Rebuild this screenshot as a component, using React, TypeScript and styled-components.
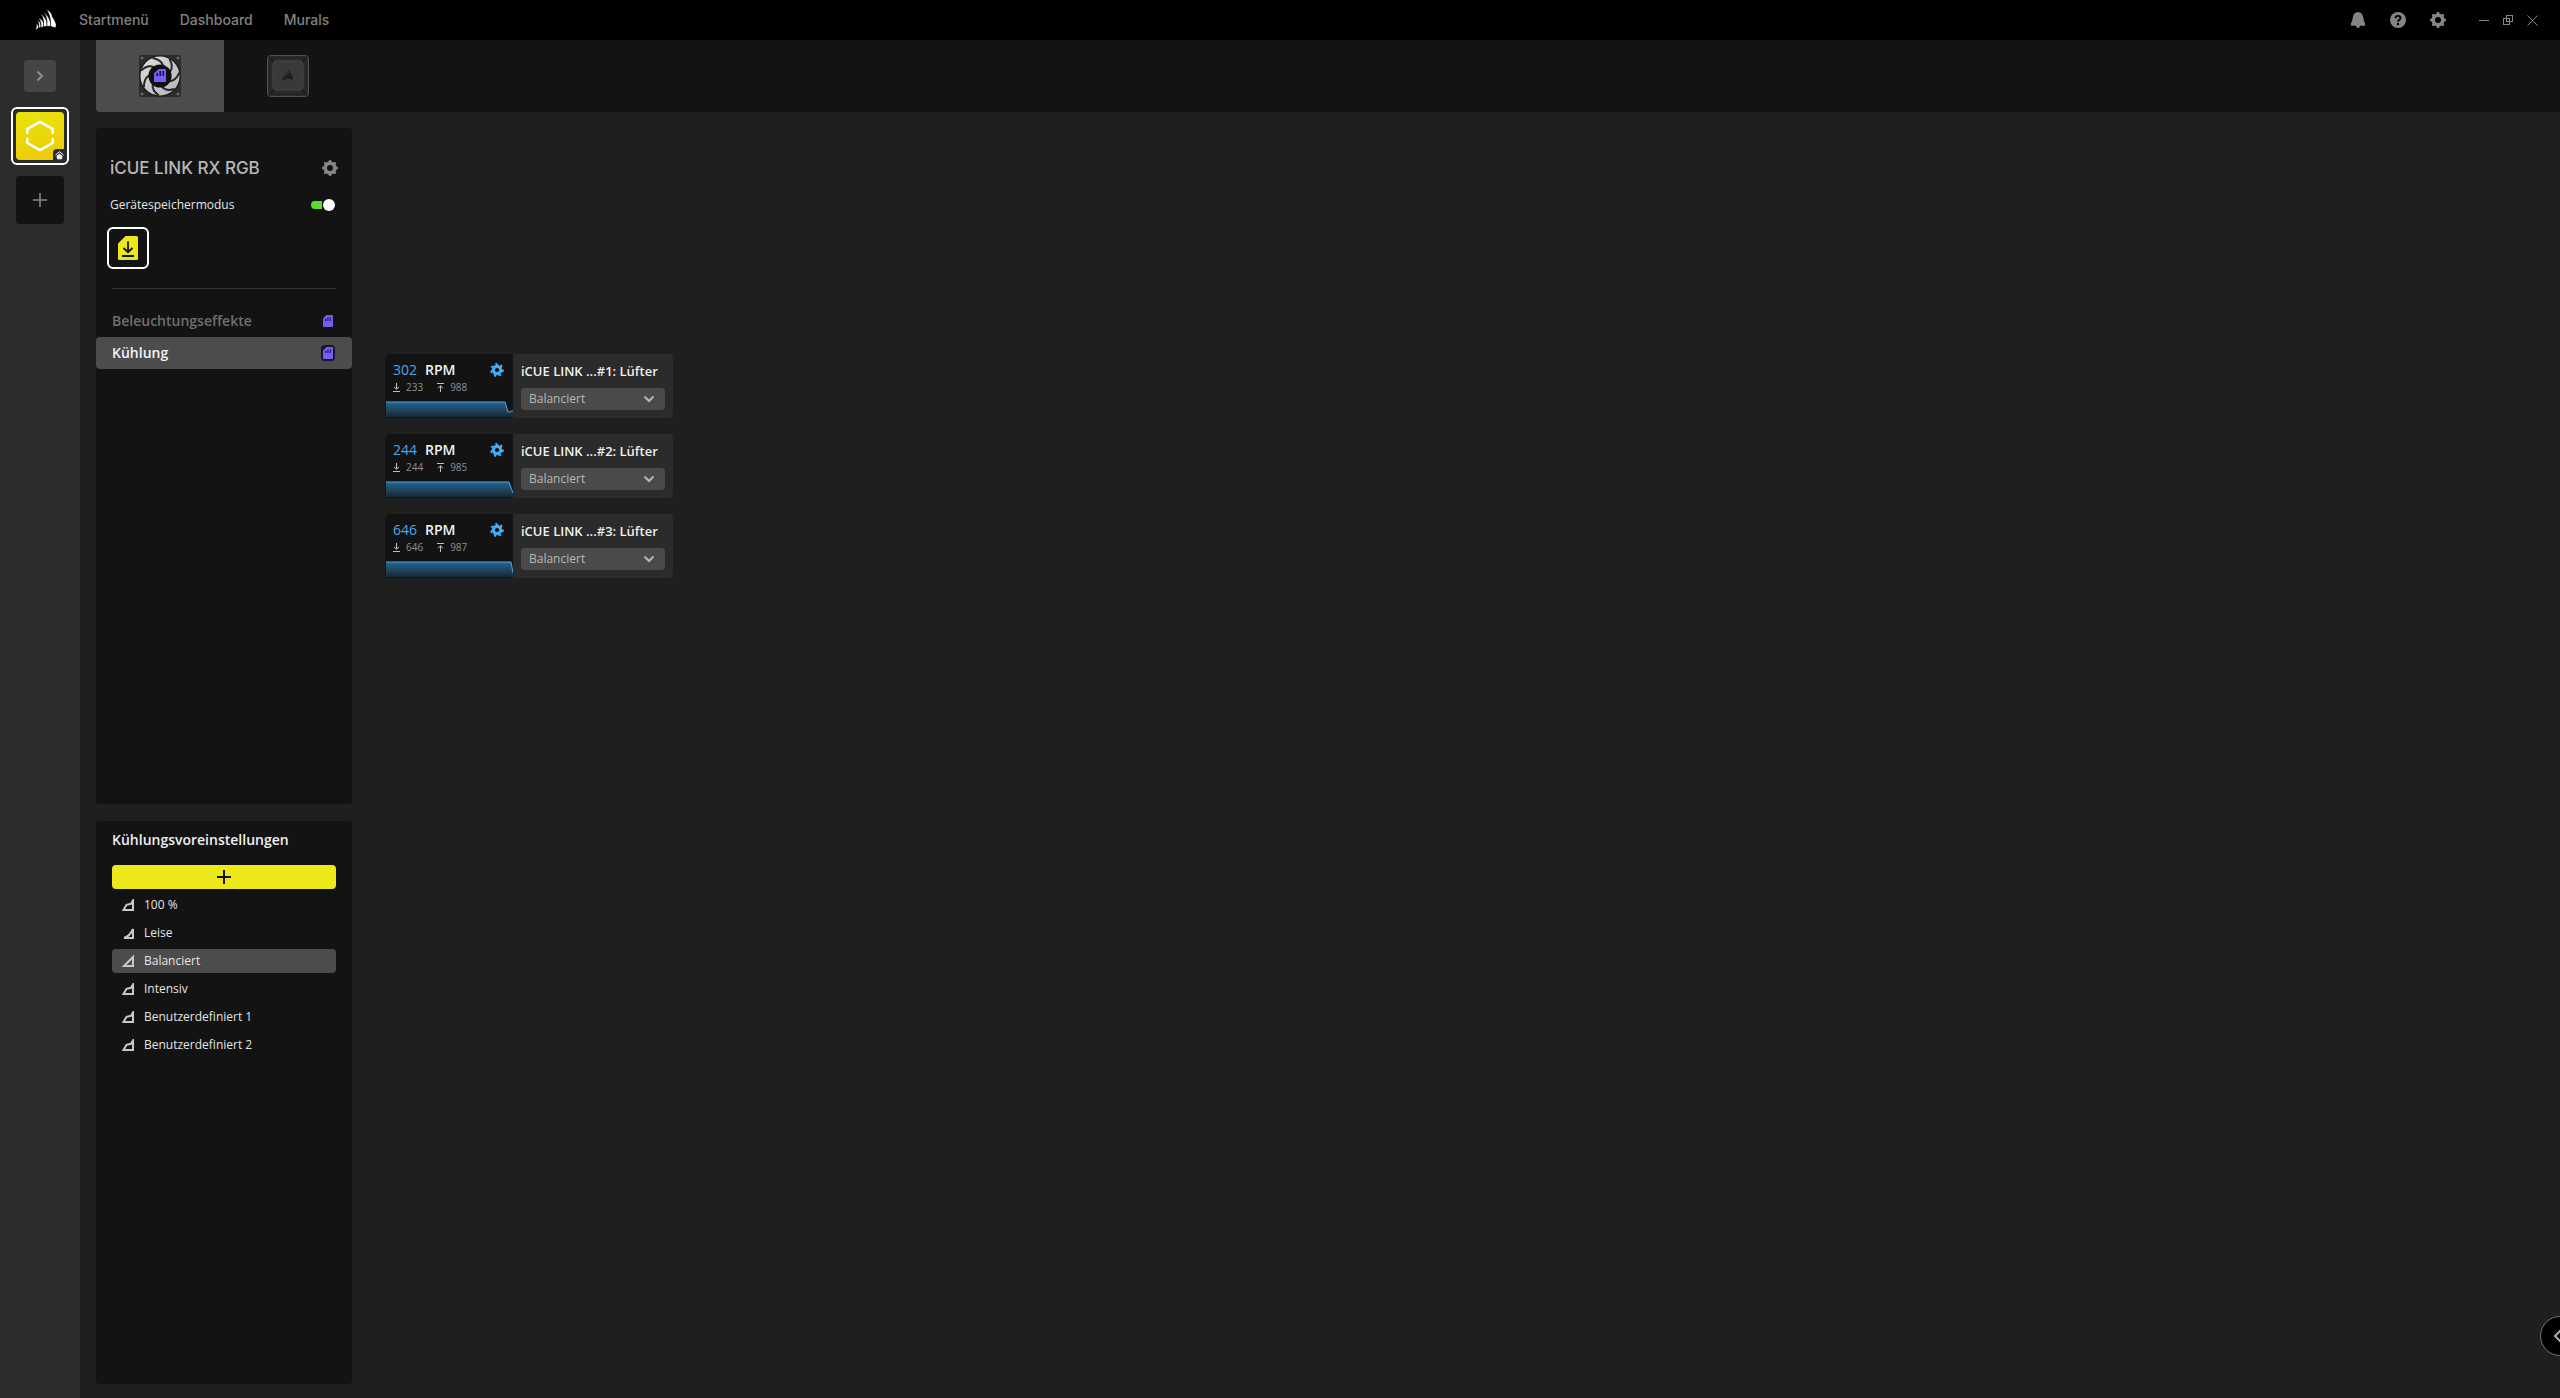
import React from 'react';
import styled, { createGlobalStyle } from 'styled-components';

const uiFont = '"Open Sans", "Noto Sans", sans-serif';
const brandFont = 'Inter, "Open Sans", sans-serif';

const GlobalStyle = createGlobalStyle`
  *, *::before, *::after { box-sizing: border-box; }
  html, body { margin: 0; background: #1f1f1f; }
  body { font: 400 12px/20px ${uiFont}; color: #e4e4e4; overflow: hidden; }
  button, select { font: inherit; color: inherit; border: 0; padding: 0; background: none; cursor: pointer; }
  svg { display: block; flex: none; }
`;

const Shell = styled.div`
  display: flex;
  flex-direction: column;
  height: 100vh;
`;

const TopBar = styled.header`
  display: flex;
  align-items: center;
  flex: none;
  height: 40px;
  padding: 0 22px 0 34px;
  background: #000;
  color: #858585;
`;

const Menu = styled.nav`
  display: flex;
  gap: 31px;
  margin-left: 23px;
  flex: 1;
`;

const MenuLink = styled.a`
  font: 500 14px/20px ${brandFont};
  color: #808080;
  text-decoration: none;
`;

const IconGroup = styled.div<{ $gap: number }>`
  display: flex;
  align-items: center;
  gap: ${p => p.$gap}px;
  margin-left: 33px;
`;

const IconButton = styled.button`
  display: flex;
  align-items: center;
  justify-content: center;
  color: #858585;
`;

const Body = styled.div`
  display: flex;
  flex: 1;
  min-height: 0;
`;

const Rail = styled.aside`
  display: flex;
  flex-direction: column;
  align-items: center;
  flex: none;
  width: 80px;
  padding-top: 20px;
  background: #2c2c2c;
`;

const ExpandButton = styled(IconButton)`
  width: 32px;
  height: 32px;
  border-radius: 4px;
  background: #454545;
`;

const ProfileButton = styled.button`
  position: relative;
  width: 58px;
  height: 58px;
  margin: 15px 0 11px;
  padding: 3px;
  border: 2px solid #fff;
  border-radius: 6px;
`;

const ProfileFace = styled.span`
  display: flex;
  align-items: center;
  justify-content: center;
  height: 100%;
  border-radius: 4px;
  background: linear-gradient(165deg, #e8e60c, #eec808);
`;

const ProfileBadge = styled.span`
  position: absolute;
  right: 3px;
  bottom: 3px;
  padding: 2px 0 0 2px;
  border-radius: 4px 0 0 0;
  background: #2c2c2c;
`;

const AddProfile = styled(IconButton)`
  width: 48px;
  height: 48px;
  border-radius: 4px;
  background: #131313;
`;

const Content = styled.div`
  display: flex;
  flex-direction: column;
  flex: 1;
  padding-left: 16px;
`;

const DeviceTabs = styled.div`
  display: flex;
  flex: none;
  height: 72px;
  border-radius: 0 0 0 4px;
  background: #131313;
  overflow: hidden;
`;

const DeviceTab = styled.button<{ $active?: boolean }>`
  display: flex;
  align-items: center;
  justify-content: center;
  width: 128px;
  background: ${p => (p.$active ? '#4c4c4c' : 'transparent')};
`;

const Workspace = styled.div`
  display: flex;
  flex: 1;
  gap: 33px;
  min-height: 0;
  padding: 16px 16px 14px 0;
`;

const Sidebar = styled.div`
  display: grid;
  grid-template-rows: 6fr 5fr;
  gap: 17px;
  width: 256px;
`;

const Panel = styled.section`
  border-radius: 4px;
  background: #131313;
`;

const DevicePanel = styled(Panel)`
  padding-top: 28px;
`;

const PanelRow = styled.div<{ $gap?: number; $inset?: number }>`
  display: flex;
  align-items: center;
  justify-content: space-between;
  height: 24px;
  padding: 0 ${p => p.$inset ?? 14}px 0 14px;
  margin-bottom: ${p => p.$gap ?? 0}px;
`;

const DeviceName = styled.h1`
  margin: 0;
  font: 500 17px/24px ${brandFont};
  color: #b8b8b8;
`;

const Toggle = styled.input`
  appearance: none;
  display: flex;
  align-items: center;
  width: 24px;
  height: 12px;
  margin: 0;
  cursor: pointer;
  &::before {
    content: '';
    width: 11px;
    height: 8px;
    border-radius: 4px 0 0 4px;
    background: #5bdf2c;
  }
  &::after {
    content: '';
    width: 12px;
    height: 12px;
    margin-left: 1px;
    border-radius: 50%;
    background: #fff;
  }
`;

const SaveButton = styled.button`
  display: flex;
  align-items: center;
  justify-content: center;
  width: 42px;
  height: 42px;
  margin: 10px 11px 19px;
  border: 2px solid #fff;
  border-radius: 6px;
`;

const Divider = styled.hr`
  height: 1px;
  margin: 0 16px 16px;
  border: 0;
  background: #333;
`;

const SectionButton = styled.button<{ $active?: boolean }>`
  display: flex;
  align-items: center;
  justify-content: space-between;
  width: 100%;
  height: 32px;
  padding: 0 17px 0 16px;
  border-radius: 4px;
  font-size: 14px;
  font-weight: 600;
  color: ${p => (p.$active ? '#f4f4f4' : '#6f6f6f')};
  background: ${p => (p.$active ? '#4c4c4c' : 'transparent')};
`;

const PresetPanel = styled(Panel)`
  padding: 9px 16px;
`;

const PresetTitle = styled.h2`
  margin: 0 0 15px;
  font-size: 14px;
  font-weight: 600;
  line-height: 20px;
  color: #f0f0f0;
`;

const AddPreset = styled.button`
  display: flex;
  align-items: center;
  justify-content: center;
  width: 100%;
  height: 24px;
  border-radius: 4px;
  color: #131313;
  background: #ece819;
`;

const PresetList = styled.ul`
  display: flex;
  flex-direction: column;
  gap: 4px;
  margin: 4px 0 0;
  padding: 0;
  list-style: none;
`;

const PresetButton = styled.button<{ $active?: boolean }>`
  display: flex;
  align-items: center;
  gap: 10px;
  width: 100%;
  height: 24px;
  padding: 0 10px;
  border-radius: 4px;
  background: ${p => (p.$active ? '#4c4c4c' : 'transparent')};
`;

const FanList = styled.main`
  display: flex;
  flex-direction: column;
  gap: 16px;
  flex: 1;
  padding-top: 226px;
`;

const FanCard = styled.article`
  display: flex;
  width: 288px;
  height: 64px;
  border-radius: 4px;
  background: #2b2b2b;
  overflow: hidden;
`;

const Readout = styled.div`
  display: flex;
  flex-direction: column;
  width: 128px;
  padding: 6px 0 1px 1px;
  background: #131313;
`;

const SpeedRow = styled.div`
  display: flex;
  align-items: center;
  justify-content: space-between;
  padding: 0 9px 0 7px;
  font-size: 14px;
  line-height: 19px;
  font-weight: 600;
  color: #f4f4f4;
`;

const Speed = styled.span`
  margin-right: 8px;
  font-weight: 500;
  color: #47a8f0;
`;

const RangeRow = styled.div`
  display: flex;
  align-items: flex-start;
  gap: 14px;
  flex: 1;
  padding-left: 7px;
  font-size: 10px;
  line-height: 16px;
  color: #909090;
`;

const RangeValue = styled.span`
  display: flex;
  align-items: center;
  gap: 6px;
  height: 16px;
`;

const FanControl = styled.div`
  flex: 1;
  padding: 7px 8px;
`;

const FanLabel = styled.label`
  display: block;
  margin-bottom: 7px;
  font-size: 13px;
  line-height: 20px;
  font-weight: 600;
  color: #f0f0f0;
  white-space: nowrap;
`;

const SelectBox = styled.div`
  display: grid;
  align-items: center;
  height: 22px;
  border-radius: 4px;
  color: #b8b8b8;
  background: #4a4a4a;
  & > * { grid-area: 1 / 1; }
  & > svg { justify-self: end; margin-right: 10px; pointer-events: none; }
`;

const PresetSelect = styled.select`
  appearance: none;
  width: 100%;
  height: 22px;
  padding: 0 8px;
`;

const Drawer = styled.button`
  position: fixed;
  right: -20px;
  bottom: 42px;
  display: flex;
  align-items: center;
  width: 40px;
  height: 40px;
  padding-left: 12px;
  border: 1px solid #6d7678;
  border-radius: 50%;
  background: #000;
  color: #b0b0b0;
`;

const cogPath = (teeth: number, outer: number, inner: number, twist = 0) => {
  const step = (Math.PI * 2) / teeth;
  const at = (a: number, r: number) => `${(8 + Math.sin(a) * r).toFixed(2)} ${(8 - Math.cos(a) * r).toFixed(2)}`;
  let d = '';
  for (let i = 0; i < teeth; i++) {
    const a = i * step;
    d += `${i ? 'L' : 'M'}${at(a - step * 0.28, inner)}L${at(a - step * 0.16 + twist, outer)}L${at(a + step * 0.16 + twist, outer)}L${at(a + step * 0.28, inner)}`;
  }
  return d + 'Z';
};

const Cog = () => (
  <svg width="16" height="16" viewBox="0 0 16 16" aria-hidden="true">
    <path fillRule="evenodd" fill="currentColor" d={cogPath(8, 8, 6.6) + 'M8 5a3 3 0 1 0 0 6a3 3 0 1 0 0-6Z'} />
  </svg>
);

const FanCog = () => (
  <svg width="14" height="14" viewBox="0 0 16 16" aria-hidden="true">
    <path fillRule="evenodd" fill="#47a8f0" d={cogPath(7, 8, 6, -0.15) + 'M8 5.600a2.400 2.400 0 1 0 0 4.800a2.400 2.400 0 1 0 0-4.800Z'} />
  </svg>
);

const sailPaths = (
  <>
    <path d="M0 64C5 57 4 49 4 42C8 46 11 50 11 56Q6 60 0 64Z" />
    <path d="M7 31C15 36 20 45 17 54L10 57C13 48 11 38 7 31Z" />
    <path d="M10 27C18 28 23 34 26 42Q27 49 25 53L17 55C20 46 17 34 10 27Z" />
    <path d="M17 13C29 20 38 36 37 50L24 53C28 40 25 24 17 13Z" />
    <path d="M26 9C39 18 48 34 48 51L35 51C38 35 34 20 26 9Z" />
    <path d="M34 0C43 4 51 11 52 22Q61 34 64 46L62 56L46 51C49 33 43 13 34 0Z" />
  </>
);

const Sails = () => (
  <svg width="22" height="22" viewBox="-3 -1 66 66" fill="#fff" stroke="#000" strokeWidth="2" aria-hidden="true">{sailPaths}</svg>
);

const MemoryCard = ({ framed }: { framed?: boolean }) => (
  <svg width="14" height="16" viewBox="0 0 14 16" aria-hidden="true">
    {framed && <rect width="14" height="16" rx="4" fill="#171330" />}
    <path d="M5.500 2H11Q12 2 12 3V13Q12 14 11 14H3Q2 14 2 13V5.500Z" fill="#7a5af5" />
    <path d="M4.600 5.800v2.200M6.900 4.600v3.400M9.200 4.200v3.800" stroke="#1b1538" strokeWidth="1.100" />
  </svg>
);

const bladeGaps = Array.from({ length: 7 }, (_, i) => i * (360 / 7));

const FanPicture = () => (
  <svg width="42" height="42" viewBox="0 0 42 42" aria-hidden="true">
    <defs>
      <linearGradient id="blade" x1="0" y1="0" x2="1" y2="1">
        <stop offset="0" stopColor="#dedede" />
        <stop offset="1" stopColor="#b4b4b4" />
      </linearGradient>
    </defs>
    <rect width="42" height="42" rx="2" fill="#2c2c2c" />
    {[3, 39].map(x => [3, 39].map(y => <circle key={`${x}${y}`} cx={x} cy={y} r="1.300" fill="#707070" />))}
    <circle cx="21" cy="21" r="20.800" fill="#1c1c1c" />
    <circle cx="21" cy="21" r="19.500" fill="url(#blade)" />
    {bladeGaps.map(a => (
      <path key={a} transform={`rotate(${a + 10} 21 21)`} d="M22 10Q19.500 4.500 10.500 4.500" fill="none" stroke="#262626" strokeWidth="2" />
    ))}
    <circle cx="21" cy="21" r="11.600" fill="#101010" />
    <path d="M19.500 14H26Q27 14 27 15V27H15V18.500Z" fill="#7a5af5" />
    <path d="M18.200 18v3M21.200 16v5M24.300 16v5" stroke="#151130" strokeWidth="1.500" />
  </svg>
);

const KeyPicture = () => (
  <svg width="42" height="42" viewBox="0 0 42 42" aria-hidden="true">
    <rect x=".5" y=".5" width="41" height="41" rx="3.500" fill="#2b2b2b" stroke="#505050" />
    <path d="M2 2L8 8M40 2L34 8M2 40L8 34M40 40L34 34" stroke="#1b1b1b" strokeWidth="1.500" />
    <rect x="3" y="3" width="36" height="36" rx="3" fill="none" stroke="#202020" />
    <rect x="6" y="6" width="30" height="29" rx="4" fill="#393939" stroke="#474747" />
    <svg x="15" y="15" width="11" height="11" viewBox="0 0 64 64" fill="#1b1b1b">{sailPaths}</svg>
  </svg>
);

const presetShapes = {
  steep: 'M1.500 11L4.500 5.800L9 4.800L11 1.500V11Z',
  low: 'M2 11Q8 9 11 2V11Z',
  linear: 'M2 11L11 2V11Z',
};

const presets: { name: string; shape: keyof typeof presetShapes }[] = [
  { name: '100 %', shape: 'steep' },
  { name: 'Leise', shape: 'low' },
  { name: 'Balanciert', shape: 'linear' },
  { name: 'Intensiv', shape: 'steep' },
  { name: 'Benutzerdefiniert 1', shape: 'steep' },
  { name: 'Benutzerdefiniert 2', shape: 'steep' },
];

const fans = [
  { id: 1, rpm: 302, min: 233, max: 988, trace: 'M0 1H119L122 11H124L125 10H127' },
  { id: 2, rpm: 244, min: 244, max: 985, trace: 'M0 1H123L127 12' },
  { id: 3, rpm: 646, min: 646, max: 987, trace: 'M0 1H125L127 12' },
];

const Fan = ({ id, rpm, min, max, trace }: (typeof fans)[number]) => (
  <FanCard>
    <Readout>
      <SpeedRow>
        <span><Speed>{rpm}</Speed>RPM</span>
        <IconButton aria-label="Sensor-Einstellungen"><FanCog /></IconButton>
      </SpeedRow>
      <RangeRow>
        <RangeValue>
          <svg width="7" height="9" viewBox="0 0 7 9" fill="none" stroke="#c0c0c0" aria-hidden="true"><path d="M3.500 0V6M1 3.800L3.500 6.200L6 3.800M0 8.500H7" /></svg>
          {min}
        </RangeValue>
        <RangeValue>
          <svg width="7" height="9" viewBox="0 0 7 9" fill="none" stroke="#c0c0c0" aria-hidden="true"><path d="M3.500 9V3M1 5.200L3.500 2.800L6 5.200M0 .5H7" /></svg>
          {max}
        </RangeValue>
      </RangeRow>
      <svg width="127" height="16" viewBox="0 0 127 16" aria-hidden="true">
        <defs>
          <linearGradient id={`trace${id}`} x1="0" y1="0" x2="0" y2="1">
            <stop offset="0" stopColor="#27658f" />
            <stop offset="1" stopColor="#182833" />
          </linearGradient>
        </defs>
        <path d={`${trace}V16H0Z`} fill={`url(#trace${id})`} />
        <path d={trace} fill="none" stroke="#47a8f0" />
      </svg>
    </Readout>
    <FanControl>
      <FanLabel htmlFor={`fan${id}`}>iCUE LINK ...#{id}: Lüfter</FanLabel>
      <SelectBox>
        <PresetSelect id={`fan${id}`} defaultValue="Balanciert">
          {presets.map(p => <option key={p.name}>{p.name}</option>)}
        </PresetSelect>
        <svg width="12" height="8" viewBox="0 0 12 8" fill="none" stroke="#b8b8b8" strokeWidth="2" aria-hidden="true"><path d="M1.500 1.500L6 6L10.500 1.500" /></svg>
      </SelectBox>
    </FanControl>
  </FanCard>
);

export default function App() {
  return (
    <Shell>
      <GlobalStyle />
      <TopBar>
        <Sails />
        <Menu>
          <MenuLink href="#start">Startmenü</MenuLink>
          <MenuLink href="#dashboard">Dashboard</MenuLink>
          <MenuLink href="#murals">Murals</MenuLink>
        </Menu>
        <IconGroup $gap={24}>
          <IconButton aria-label="Benachrichtigungen">
            <svg width="16" height="16" viewBox="0 0 16 16" fill="currentColor"><path d="M1 13.700V11Q2.300 9.500 2.700 6Q3.400 0 8 0T13.300 6Q13.700 9.500 15 11V13.700H10Q9.800 16 8 16T6 13.700Z" /></svg>
          </IconButton>
          <IconButton aria-label="Hilfe">
            <svg width="16" height="16" viewBox="0 0 16 16"><circle cx="8" cy="8" r="8" fill="currentColor" /><path d="M5.500 6.300Q5.500 3.900 8 3.900T10.500 6Q10.500 7.200 9.100 8Q8 8.600 8 9.700" fill="none" stroke="#000" strokeWidth="1.900" /><circle cx="8" cy="12" r="1.200" /></svg>
          </IconButton>
          <IconButton aria-label="Einstellungen"><Cog /></IconButton>
        </IconGroup>
        <IconGroup $gap={14}>
          <IconButton aria-label="Minimieren">
            <svg width="10" height="10" viewBox="0 0 10 10"><path d="M0 5.500H10" stroke="currentColor" /></svg>
          </IconButton>
          <IconButton aria-label="Wiederherstellen">
            <svg width="10" height="10" viewBox="0 0 10 10" fill="none" stroke="currentColor" shapeRendering="crispEdges"><path d="M.5 3.500H6.500V9.500H.5ZM3.500 6.500V.5H9.500V6.500H3.500" /></svg>
          </IconButton>
          <IconButton aria-label="Schließen">
            <svg width="11" height="11" viewBox="0 0 11 11" stroke="currentColor"><path d="M.5 .5L10.500 10.500M10.500 .5L.5 10.500" /></svg>
          </IconButton>
        </IconGroup>
      </TopBar>
      <Body>
        <Rail>
          <ExpandButton aria-label="Profile ausklappen">
            <svg width="8" height="12" viewBox="0 0 8 12" fill="none" stroke="#8f8f8f" strokeWidth="2"><path d="M1.500 1.500L6 6L1.500 10.500" /></svg>
          </ExpandButton>
          <ProfileButton aria-label="Profil">
            <ProfileFace>
              <svg width="28" height="32" viewBox="0 0 28 32" fill="none" stroke="#fff" strokeWidth="2.500"><path d="M1.300 14V9L14 2L26.700 9V14M1.300 18V23L14 30L26.700 23V18" /></svg>
            </ProfileFace>
            <ProfileBadge>
              <svg width="9" height="9" viewBox="0 0 9 9" fill="none" stroke="#fff"><path d="M.5 4L4.500 .700L8.500 4" /><path d="M2 5L4.500 3.200L7 5L6.500 7.800H2.500Z" fill="#fff" /></svg>
            </ProfileBadge>
          </ProfileButton>
          <AddProfile aria-label="Profil hinzufügen">
            <svg width="14" height="14" viewBox="0 0 14 14" stroke="#8a8a8a" strokeWidth="1.500"><path d="M7 0V14M0 7H14" /></svg>
          </AddProfile>
        </Rail>
        <Content>
          <DeviceTabs>
            <DeviceTab $active aria-label="iCUE LINK RX RGB"><FanPicture /></DeviceTab>
            <DeviceTab aria-label="Tastatur"><KeyPicture /></DeviceTab>
          </DeviceTabs>
          <Workspace>
            <Sidebar>
              <DevicePanel>
                <PanelRow $gap={13}>
                  <DeviceName>iCUE LINK RX RGB</DeviceName>
                  <IconButton aria-label="Geräteeinstellungen"><Cog /></IconButton>
                </PanelRow>
                <PanelRow $inset={17}>
                  <label htmlFor="memory">Gerätespeichermodus</label>
                  <Toggle id="memory" type="checkbox" defaultChecked />
                </PanelRow>
                <SaveButton aria-label="Im Gerät speichern">
                  <svg width="20" height="24" viewBox="0 0 20 24"><path d="M7.500 0H18.500Q20 0 20 1.500V22.500Q20 24 18.500 24H1.500Q0 24 0 22.500V7.500Z" fill="#ece819" /><path d="M10 5.500V16M5.500 12L10 16.200L14.500 12M4 20H16" fill="none" stroke="#131313" strokeWidth="1.800" /></svg>
                </SaveButton>
                <Divider />
                <SectionButton>Beleuchtungseffekte<MemoryCard /></SectionButton>
                <SectionButton $active>Kühlung<MemoryCard framed /></SectionButton>
              </DevicePanel>
              <PresetPanel>
                <PresetTitle>Kühlungsvoreinstellungen</PresetTitle>
                <AddPreset aria-label="Voreinstellung hinzufügen">
                  <svg width="14" height="14" viewBox="0 0 14 14" stroke="currentColor" strokeWidth="2"><path d="M7 0V14M0 7H14" /></svg>
                </AddPreset>
                <PresetList>
                  {presets.map(p => (
                    <li key={p.name}>
                      <PresetButton $active={p.name === 'Balanciert'}>
                        <svg width="12" height="12" viewBox="0 0 12 12" fill="none" stroke="#c8c8c8" strokeWidth="2"><path d={presetShapes[p.shape]} /></svg>
                        {p.name}
                      </PresetButton>
                    </li>
                  ))}
                </PresetList>
              </PresetPanel>
            </Sidebar>
            <FanList>
              {fans.map(f => <Fan key={f.id} {...f} />)}
            </FanList>
          </Workspace>
        </Content>
      </Body>
      <Drawer aria-label="Seitenleiste öffnen">
        <svg width="10" height="16" viewBox="0 0 10 16" fill="none" stroke="currentColor" strokeWidth="2"><path d="M9 1L2 8L9 15" /></svg>
      </Drawer>
    </Shell>
  );
}
